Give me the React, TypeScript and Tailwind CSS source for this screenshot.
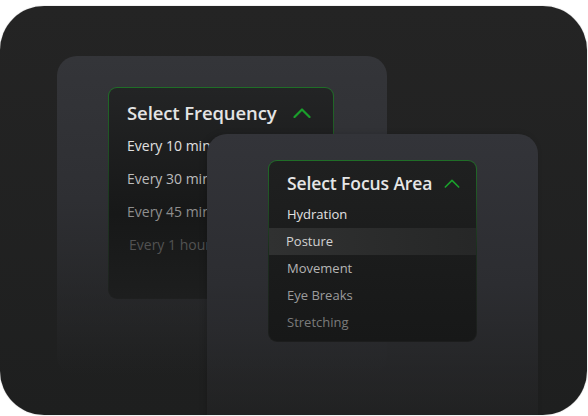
import React from "react";

const Chevron = ({ w, h, sw }: { w: number; h: number; sw: number }) => (
  <svg width={w} height={h} viewBox="0 0 18 10" fill="none" className="shrink-0">
    <path d="M1.5 9 L9 1.5 L16.5 9" stroke="#1a9f2b" strokeWidth={sw} strokeLinecap="round" strokeLinejoin="round" />
  </svg>
);

export default function App() {
  const font = { fontFamily: "'Open Sans', 'Noto Sans', sans-serif" };
  return (
    <div className="w-[588px] h-[416px] bg-white pt-[6px]" style={font}>
      <div className="w-[587px] h-[409px] rounded-[44px] overflow-hidden bg-linear-to-b from-[#242424] to-[#1e1f1f] shadow-[0_0_1px_rgba(0,0,0,0.5)] grid">
        {/* back panel */}
        <div className="col-start-1 row-start-1 ml-[57px] mt-[50px] w-[330px] h-[320px] rounded-[20px] bg-linear-to-b from-[#343539] via-[#2e2f33] via-45% to-[#222222]/0 pt-[31px] pl-[51px]">
          <div className="w-[226px] h-[212px] rounded-[9px] p-px bg-linear-to-b from-[#1f6e27] via-[#1c3a1f] via-50% to-[#1e1f1f]">
            <div className="h-full rounded-[8px] bg-linear-to-b from-[#232425] via-[#171818] via-60% to-[#1d1e1e] pl-[18px] pr-[22px]">
              <div className="flex items-center justify-between pt-[15px] pb-[6px]">
                <span className="text-[18.5px] leading-[20px] font-semibold text-[#e4e4e4] tracking-[-0.1px]">Select Frequency</span>
                <Chevron w={18} h={10} sw={2.2} />
              </div>
              <div className="flex flex-col text-[14px]">
                <div className="h-[33px] flex items-center text-[#e0e0e0]">Every 10 min</div>
                <div className="h-[33px] flex items-center text-[#bcbcbc]">Every 30 min</div>
                <div className="h-[33px] flex items-center text-[#8e8e8e]">Every 45 min</div>
                <div className="h-[33px] flex items-center pl-[2px] text-[#525252]">Every 1 hour</div>
              </div>
            </div>
          </div>
        </div>
        {/* front panel */}
        <div className="col-start-1 row-start-1 ml-[207px] mt-[128px] w-[331px] h-[300px] rounded-[20px] bg-linear-to-b from-[#333439] via-[#2c2d31] via-50% to-[#222222]/30 pt-[26px] pl-[61px] shadow-[-2px_0_6px_rgba(0,0,0,0.15)]">
          <div className="w-[209px] h-[182px] rounded-[9px] p-px bg-linear-to-b from-[#1f6e27] via-[#1c2e1e] via-50% to-[#1c1d1d]">
            <div className="h-full rounded-[8px] bg-linear-to-b from-[#1f2020] to-[#171818] overflow-hidden">
              <div className="flex items-center justify-between pt-[12px] pb-[8px] pl-[18px] pr-[16px]">
                <span className="text-[17.5px] leading-[20px] font-semibold text-[#e6e6e6] tracking-[-0.1px]">Select Focus Area</span>
                <Chevron w={16} h={9} sw={1.8} />
              </div>
              <div className="flex flex-col text-[13px]">
                <div className="h-[27px] flex items-center pl-[18px] text-[#e2e2e2]">Hydration</div>
                <div className="h-[27px] flex items-center pl-[17px] text-[#d2d2d2] bg-linear-to-r from-[#303131] to-[#262727]">Posture</div>
                <div className="h-[27px] flex items-center pl-[18px] text-[#b5b5b5]">Movement</div>
                <div className="h-[27px] flex items-center pl-[18px] text-[#9c9c9c]">Eye Breaks</div>
                <div className="h-[27px] flex items-center pl-[18px] text-[#7b7b7b]">Stretching</div>
              </div>
            </div>
          </div>
        </div>
      </div>
    </div>
  );
}
